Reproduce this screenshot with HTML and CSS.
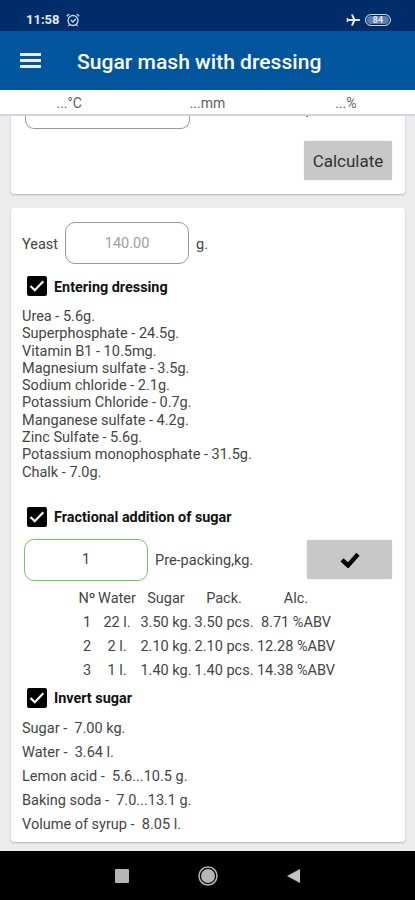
FILE: index.html
```html
<!DOCTYPE html>
<html lang="en">
<head>
  <meta charset="UTF-8">
  <meta name="viewport" content="width=device-width, initial-scale=1.0">
  <title>Sugar mash with dressing</title>
  <link rel="stylesheet" href="styles.css">
</head>
<body>
  <div class="status-bar">
    <span class="clock">11:58</span>
    <svg class="alarm" viewBox="0 0 14 14" width="14" height="14" fill="none" stroke="#c9d6ec" stroke-width="1.3">
      <circle cx="7" cy="7.5" r="5"/>
      <path d="M4.8 7l2 2 3-3M.8 3.2L3.2 1M13.2 3.2L10.8 1M3.5 11.7l-1 1.5M10.5 11.7l1 1.5"/>
    </svg>
    <svg class="plane" viewBox="0 0 14 12" width="14" height="12" fill="none" stroke="#e3eaf6" stroke-linecap="round">
      <path d="M1.500 6H13" stroke-width="2.100"/>
      <path d="M8.500 6L6.300 1.200M8.500 6L6.300 10.800" stroke-width="2"/>
      <path d="M2.300 6L1.200 4.300M2.300 6L1.200 7.700" stroke-width="1.200"/>
    </svg>
    <span class="battery">84</span>
  </div>

  <header class="app-bar">
    <div class="menu-icon"><i></i><i></i><i></i></div>
    <h1>Sugar mash with dressing</h1>
  </header>

  <div class="sensors">
    <span>...°C</span>
    <span>...mm</span>
    <span>...%</span>
  </div>

  <main class="content">
    <section class="card card-top">
      <div class="cut-row">
        <div class="cut-field"></div>
        <div class="cut-dot"></div>
      </div>
      <button class="btn calculate">Calculate</button>
    </section>

    <section class="card card-main">
      <div class="yeast-row">
        <span class="yeast-label">Yeast</span>
        <div class="field field-grey">140.00</div>
        <span class="yeast-label">g.</span>
      </div>

      <div class="check-row">
        <svg class="checkbox" viewBox="0 0 20 20" width="20" height="20"><rect width="20" height="20" rx="2"/><path d="M3.500 10l4.300 4.200L16.300 5.300" fill="none" stroke="#fff" stroke-width="2.200"/></svg>
        <b>Entering dressing</b>
      </div>
      <ul class="dressing">
        <li>Urea - 5.6g.</li>
        <li>Superphosphate - 24.5g.</li>
        <li>Vitamin B1 - 10.5mg.</li>
        <li>Magnesium sulfate - 3.5g.</li>
        <li>Sodium chloride - 2.1g.</li>
        <li>Potassium Chloride - 0.7g.</li>
        <li>Manganese sulfate - 4.2g.</li>
        <li>Zinc Sulfate - 5.6g.</li>
        <li>Potassium monophosphate - 31.5g.</li>
        <li>Chalk - 7.0g.</li>
      </ul>

      <div class="check-row">
        <svg class="checkbox" viewBox="0 0 20 20" width="20" height="20"><rect width="20" height="20" rx="2"/><path d="M3.500 10l4.300 4.200L16.300 5.300" fill="none" stroke="#fff" stroke-width="2.200"/></svg>
        <b>Fractional addition of sugar</b>
      </div>
      <div class="pack-row">
        <div class="field field-green">1</div>
        <span class="pack-label">Pre-packing,kg.</span>
        <button class="btn confirm">
          <svg viewBox="0 0 20 16" width="20" height="16"><path d="M2 7.800l6 5.600L18 2.200" fill="none" stroke="#000" stroke-width="4.400"/></svg>
        </button>
      </div>

      <div class="portions">
        <span>Nº</span><span>Water</span><span>Sugar</span><span>Pack.</span><span>Alc.</span>
        <span>1</span><span>22 l.</span><span>3.50 kg.</span><span>3.50 pcs.</span><span>8.71 %ABV</span>
        <span>2</span><span>2 l.</span><span>2.10 kg.</span><span>2.10 pcs.</span><span>12.28 %ABV</span>
        <span>3</span><span>1 l.</span><span>1.40 kg.</span><span>1.40 pcs.</span><span>14.38 %ABV</span>
      </div>

      <div class="check-row check-invert">
        <svg class="checkbox" viewBox="0 0 20 20" width="20" height="20"><rect width="20" height="20" rx="2"/><path d="M3.500 10l4.300 4.200L16.300 5.300" fill="none" stroke="#fff" stroke-width="2.200"/></svg>
        <b>Invert sugar</b>
      </div>
      <ul class="invert">
        <li>Sugar -  7.00 kg.</li>
        <li>Water -  3.64 l.</li>
        <li>Lemon acid -  5.6...10.5 g.</li>
        <li>Baking soda -  7.0...13.1 g.</li>
        <li>Volume of syrup -  8.05 l.</li>
      </ul>
    </section>
  </main>

  <nav class="nav-bar">
    <svg viewBox="0 0 14 14" width="14" height="14"><rect width="14" height="14" rx="1" fill="#b5b5b5"/></svg>
    <svg viewBox="0 0 20 20" width="20" height="20"><circle cx="10" cy="10" r="9" fill="none" stroke="#b5b5b5" stroke-width="1.500"/><circle cx="10" cy="10" r="7" fill="#b5b5b5"/></svg>
    <svg viewBox="0 0 14 14" width="14" height="14"><path d="M0 7L13 0v14z" fill="#c4c4c4"/></svg>
  </nav>
</body>
</html>
```
FILE: styles.css
```css
* {
  box-sizing: border-box;
}

body {
  margin: 0;
  height: 900px;
  display: flex;
  flex-direction: column;
  overflow: hidden;
  font-family: Roboto, sans-serif;
  font-size: 14.5px;
  color: #444;
  background: #ececec;
}

ul {
  list-style: none;
  margin: 0;
  padding: 0;
}

.status-bar {
  flex: none;
  height: 31px;
  display: flex;
  align-items: center;
  padding: 8px 24px 0 26px;
  background: #002d6a;
  color: #e3eaf6;
}

.clock {
  font-size: 13px;
  font-weight: 700;
}

.alarm {
  margin-left: 6px;
}

.plane {
  margin-left: auto;
}

.battery {
  width: 26px;
  height: 12px;
  margin-left: 5px;
  border: 1px solid #c9d6ec;
  border-radius: 6px;
  box-shadow: inset 0 0 0 1px #002d6a;
  background: #5f7ba8;
  font-size: 9px;
  font-weight: 700;
  line-height: 10px;
  text-align: center;
}

.app-bar {
  flex: none;
  height: 59px;
  display: flex;
  align-items: center;
  padding: 2px 20px 0;
  background: #00559c;
}

.menu-icon {
  width: 21px;
  display: flex;
  flex-direction: column;
  gap: 3px;
  margin-bottom: 3px;
}

.menu-icon i {
  height: 3px;
  background: #e8eff8;
}

.app-bar h1 {
  margin: 0 0 0 36px;
  font-size: 21.1px;
  font-weight: 500;
  color: #fff;
  white-space: nowrap;
}

.sensors {
  flex: none;
  height: 26px;
  display: grid;
  grid-template-columns: repeat(3, 1fr);
  align-items: center;
  padding-top: 1px;
  text-align: center;
  background: #fff;
  border-bottom: 2px solid #ccd8e6;
  font-size: 14px;
  color: #606060;
}

.content {
  flex: 1;
  min-height: 0;
  padding: 0 10px 0 11px;
}

.card {
  background: #fff;
  box-shadow: 0 1px 2px rgba(0, 0, 0, 0.25);
}

.card-top {
  height: 78px;
  padding: 0 13px 0 14px;
  border-radius: 0 0 3px 3px;
}

.cut-row {
  display: flex;
  height: 13px;
}

.cut-field {
  width: 165px;
  border: 1px solid #999;
  border-top: 0;
  border-radius: 0 0 9px 9px;
}

.cut-dot {
  width: 2px;
  height: 1px;
  margin-left: 116px;
  background: #777;
}

.btn {
  display: block;
  padding: 0;
  border: 0;
  border-radius: 2px;
  background: #c8c8c8;
  box-shadow: 0 0 1px #aaa;
  font-family: inherit;
  color: #333;
}

.calculate {
  width: 88px;
  height: 39px;
  margin: 12px 0 0 auto;
  font-size: 17px;
}

.card-main {
  height: 634px;
  margin-top: 14px;
  padding: 14px 13px 0 11px;
  border-radius: 3px;
}

.yeast-row {
  display: flex;
  align-items: center;
}

.yeast-label {
  padding-top: 2px;
}

.field {
  height: 42px;
  display: flex;
  align-items: center;
  justify-content: center;
  border: 1px solid #999;
  border-radius: 10px;
}

.field-grey {
  width: 124px;
  margin: 0 7px;
  color: #a0a0a0;
}

.field-green {
  width: 124px;
  border-color: #72c95c;
}

.check-row {
  display: flex;
  align-items: center;
  height: 20px;
  margin: 12px 0 0 5px;
  color: #111;
}

.checkbox {
  margin-right: 7px;
}

.check-row b {
  padding-top: 2px;
  font-size: 14.4px;
}

.dressing {
  margin: 12px 0 26px;
  line-height: 17.3px;
}

.pack-row {
  display: flex;
  align-items: center;
  margin: 12px 0 0 2px;
}

.pack-label {
  margin-left: 7px;
  padding-top: 2px;
}

.confirm {
  width: 85px;
  height: 39px;
  margin-left: auto;
}

.confirm svg {
  display: block;
  margin: auto;
}

.portions {
  display: grid;
  grid-template-columns: 18px 42px 56px 60px 84px;
  justify-content: start;
  margin: 6px 0 0 56px;
  line-height: 24px;
  text-align: center;
  white-space: nowrap;
}

.check-invert {
  margin-top: 5px;
}

.invert {
  margin-top: 9px;
  line-height: 24px;
}

.invert li {
  white-space: pre;
}

.nav-bar {
  flex: none;
  height: 49px;
  display: flex;
  align-items: center;
  padding-left: 115px;
  gap: 69px;
  background: #000;
}
```
